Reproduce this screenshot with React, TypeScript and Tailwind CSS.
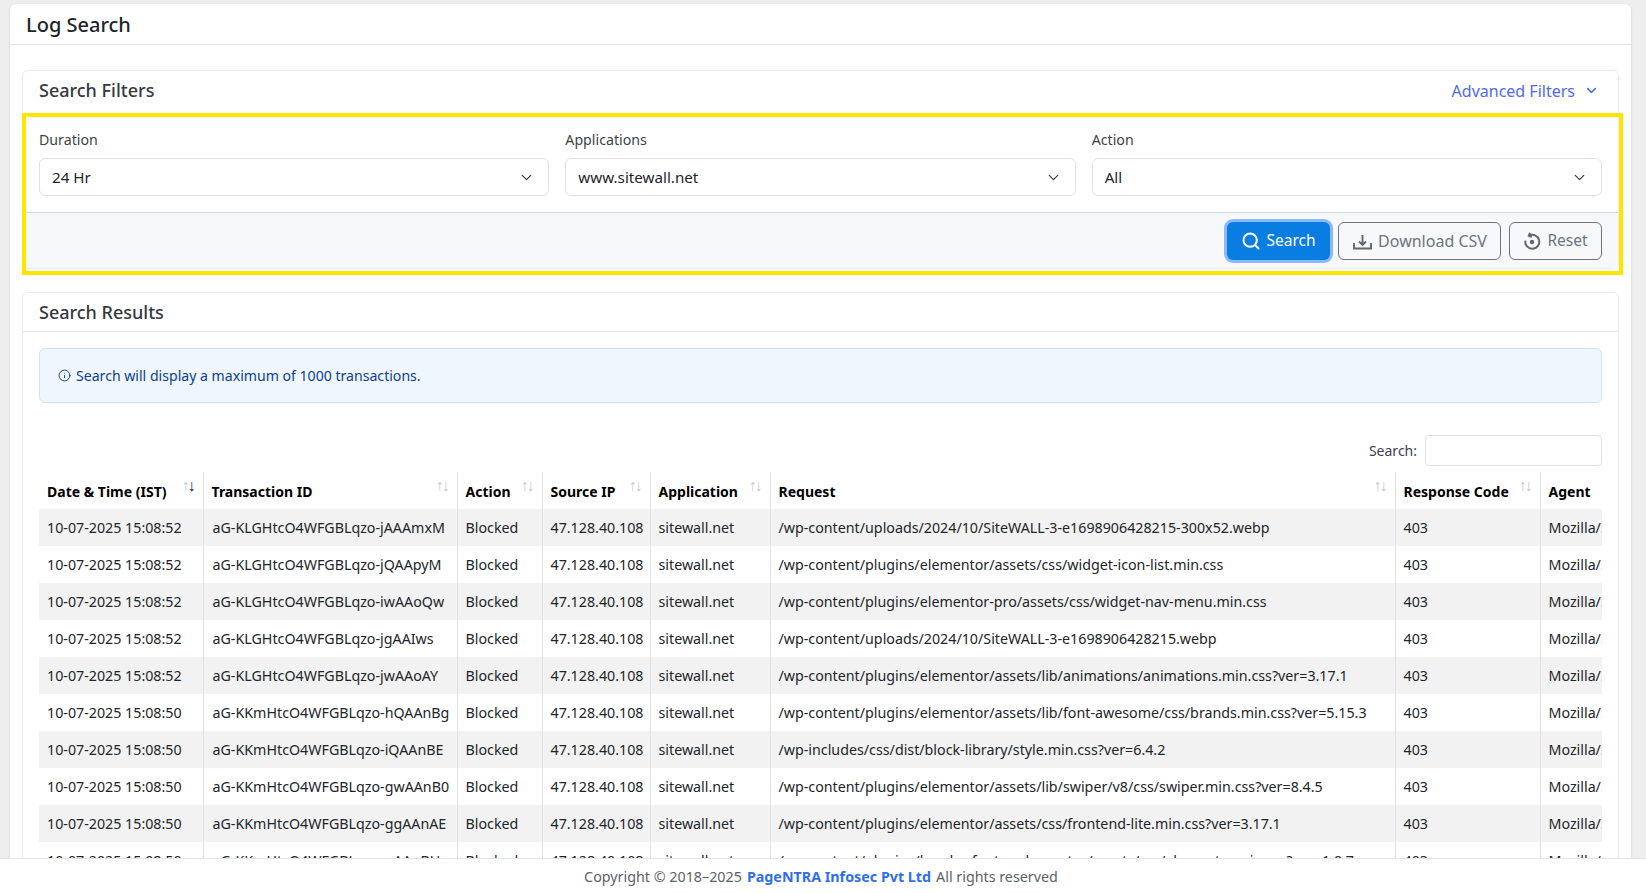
import { ChevronDown, Info, Search } from 'lucide-react'

const rows = [
  ['10-07-2025 15:08:52', 'aG-KLGHtcO4WFGBLqzo-jAAAmxM', '/wp-content/uploads/2024/10/SiteWALL-3-e1698906428215-300x52.webp'],
  ['10-07-2025 15:08:52', 'aG-KLGHtcO4WFGBLqzo-jQAApyM', '/wp-content/plugins/elementor/assets/css/widget-icon-list.min.css'],
  ['10-07-2025 15:08:52', 'aG-KLGHtcO4WFGBLqzo-iwAAoQw', '/wp-content/plugins/elementor-pro/assets/css/widget-nav-menu.min.css'],
  ['10-07-2025 15:08:52', 'aG-KLGHtcO4WFGBLqzo-jgAAIws', '/wp-content/uploads/2024/10/SiteWALL-3-e1698906428215.webp'],
  ['10-07-2025 15:08:52', 'aG-KLGHtcO4WFGBLqzo-jwAAoAY', '/wp-content/plugins/elementor/assets/lib/animations/animations.min.css?ver=3.17.1'],
  ['10-07-2025 15:08:50', 'aG-KKmHtcO4WFGBLqzo-hQAAnBg', '/wp-content/plugins/elementor/assets/lib/font-awesome/css/brands.min.css?ver=5.15.3'],
  ['10-07-2025 15:08:50', 'aG-KKmHtcO4WFGBLqzo-iQAAnBE', '/wp-includes/css/dist/block-library/style.min.css?ver=6.4.2'],
  ['10-07-2025 15:08:50', 'aG-KKmHtcO4WFGBLqzo-gwAAnB0', '/wp-content/plugins/elementor/assets/lib/swiper/v8/css/swiper.min.css?ver=8.4.5'],
  ['10-07-2025 15:08:50', 'aG-KKmHtcO4WFGBLqzo-ggAAnAE', '/wp-content/plugins/elementor/assets/css/frontend-lite.min.css?ver=3.17.1'],
  ['10-07-2025 15:08:50', 'aG-KKmHtcO4WFGBLqzo-gAAnBU', '/wp-content/plugins/header-footer-elementor/assets/css/elementor.min.css?ver=1.0.7'],
]

const columns = [
  { name: 'Date & Time (IST)', width: 'w-[164px]', active: true },
  { name: 'Transaction ID', width: 'w-[254px]' },
  { name: 'Action', width: 'w-[85px]' },
  { name: 'Source IP', width: 'w-[108px]' },
  { name: 'Application', width: 'w-[120px]' },
  { name: 'Request', width: 'w-[625px]' },
  { name: 'Response Code', width: 'w-[145px]' },
]

const SortArrows = ({ active }: { active?: boolean }) => (
  <span className="absolute right-[9px] top-[3px] text-[16px] leading-5 font-normal tracking-[-2px]">
    <span className="text-[#c4c7cb]">↑</span>
    <span className={active ? 'text-[#212529]' : 'text-[#c4c7cb]'}>↓</span>
  </span>
)

const Select = ({ label, value }: { label: string; value: string }) => (
  <div>
    <div className="mb-[8px] text-[14.2px] leading-[20px] text-[#3d4349]">{label}</div>
    <div className="flex h-[38px] items-center justify-between rounded-md border border-[#dee2e6] pl-3 pr-[13px] text-[15.2px] text-[#212529]">
      <span className="pt-[1px]">{value}</span>
      <ChevronDown size={17} strokeWidth={1.7} className="text-[#343a40]" />
    </div>
  </div>
)

const App = () => {
  return (
    <div className="flex h-[893px] flex-col overflow-hidden bg-[#eeeeee] font-['Noto_Sans',sans-serif] text-[#212529]">
      <div className="min-h-0 flex-1 overflow-hidden pt-[4px] pl-[10px] pr-[15px]">
        <div className="rounded-t-md bg-white shadow-sm">
          <div className="flex h-[41px] items-center border-b border-[#e3e5e8] pl-4 pt-[2px] text-[20px] font-medium text-[#212529]">
            Log Search
          </div>
          <div className="px-3 pt-[25px]">
            {/* search filters */}
            <div className="relative rounded-md border border-[#e9ebee] bg-white">
              <div className="flex h-[43px] items-center justify-between pb-[4px] pl-4 pr-[19px]">
                <span className="text-[18px] font-medium text-[#343a40]">Search Filters</span>
                <span className="flex items-center gap-[9px] text-[16px] text-[#4f6bed]">
                  Advanced Filters
                  <ChevronDown size={15} strokeWidth={2.4} />
                </span>
              </div>
              <div className="grid grid-cols-3 gap-x-4 border-b border-[#d4d6d9] px-4 pt-[16px] pb-[16px]">
                <Select label="Duration" value="24 Hr" />
                <Select label="Applications" value="www.sitewall.net" />
                <Select label="Action" value="All" />
              </div>
              <div className="flex h-[55px] items-center justify-end gap-[8px] rounded-b-md bg-[#f6f8fa] pr-4">
                <button className="flex h-[38px] w-[103px] items-center justify-center gap-[5px] rounded-md bg-[#0a7de3] text-[15.5px] text-white ring-[3px] ring-[#8ab8f8]">
                  <Search size={20} strokeWidth={2.4} />
                  Search
                </button>
                <button className="flex h-[38px] w-[163px] items-center justify-center gap-[5px] rounded-md border border-[#6c757d] text-[16px] text-[#6c757d]">
                  <svg width="21" height="18" viewBox="0 0 21 18" fill="none" stroke="#5f676f" strokeWidth="1.9">
                    <path d="M2 11v5.5h17V11M10.5 3v10M7 9.5l3.5 3.5L14 9.5" />
                  </svg>
                  Download CSV
                </button>
                <button className="flex h-[38px] w-[93px] items-center justify-center gap-[6px] rounded-md border border-[#6c757d] text-[15.5px] text-[#6c757d]">
                  <svg width="18" height="18" viewBox="0 0 18 18" fill="none" stroke="#5f676f" strokeWidth="2">
                    <path d="M6 3.6a7 7 0 1 1-3.6 5" />
                    <path d="M7 .8 5.8 3.8l3 1.2" />
                    <circle cx="9" cy="10" r="2.2" fill="#5f676f" stroke="none" />
                  </svg>
                  Reset
                </button>
              </div>
              {/* yellow annotation frame */}
              <div className="pointer-events-none absolute -left-[1px] -right-[5px] top-[42px] bottom-[-7px] border-4 border-[#ffe600]" />
            </div>

            {/* search results */}
            <div className="mt-[23px] rounded-t-md border border-[#e9ebee] bg-white">
              <div className="flex h-[39px] items-center border-b border-[#e3e5e8] pl-4 text-[18px] font-medium text-[#343a40]">
                Search Results
              </div>
              <div className="px-4 pt-4">
                <div className="flex h-[55px] items-center gap-[5px] rounded-md border border-[#cfe2ff] bg-[#eff6fe] pl-[18px] text-[14.1px] text-[#0b3f91]">
                  <Info size={13} strokeWidth={1.8} />
                  Search will display a maximum of 1000 transactions.
                </div>
                <div className="mt-[32px] flex h-[31px] items-center justify-end gap-2 text-sm text-[#3d4349]">
                  Search:
                  <input className="h-[31px] w-[177px] rounded border border-[#dee2e6] bg-white" />
                </div>
                <div className="mt-[6px] overflow-hidden">
                  <table className="w-[1700px] table-fixed border-collapse text-[14.25px]">
                    <thead>
                      <tr className="h-[37px]">
                        {columns.map((c) => (
                          <th key={c.name} className={`${c.width} relative border-r border-[#dee2e6] pl-2 pt-[2px] text-left text-[14px] font-bold whitespace-nowrap text-black`}>
                            {c.name}
                            <SortArrows active={c.active} />
                          </th>
                        ))}
                        <th className="pl-2 pt-[2px] text-left text-[14px] font-bold text-black">Agent</th>
                      </tr>
                    </thead>
                    <tbody>
                      {rows.map((r, i) => (
                        <tr key={r[1]} className={`h-[37px] ${i % 2 === 0 ? 'bg-[#f2f2f2]' : 'bg-white'}`}>
                          <td className="overflow-hidden border-r border-[#dee2e6] pl-2 whitespace-nowrap">{r[0]}</td>
                          <td className="overflow-hidden border-r border-[#dee2e6] pl-[9px] whitespace-nowrap">{r[1]}</td>
                          <td className="overflow-hidden border-r border-[#dee2e6] pl-2">Blocked</td>
                          <td className="overflow-hidden border-r border-[#dee2e6] pl-2">47.128.40.108</td>
                          <td className="overflow-hidden border-r border-[#dee2e6] pl-2">sitewall.net</td>
                          <td className="overflow-hidden border-r border-[#dee2e6] pl-2 whitespace-nowrap">{r[2]}</td>
                          <td className="overflow-hidden border-r border-[#dee2e6] pl-2">403</td>
                          <td className="overflow-hidden pl-2 whitespace-nowrap">Mozilla/5.0 (Windows NT 10.0)</td>
                        </tr>
                      ))}
                    </tbody>
                  </table>
                </div>
              </div>
            </div>
          </div>
        </div>
      </div>
      <footer className="flex h-[35px] shrink-0 items-center justify-center gap-[5px] border-t border-[#e5e5e5] bg-white pt-[2px] pr-[4px] text-[14.3px] text-[#5c6269]">
        Copyright © 2018–2025 <span className="font-bold text-[#2f6fed]">PageNTRA Infosec Pvt Ltd</span> All rights reserved
      </footer>
    </div>
  )
}

export default App
